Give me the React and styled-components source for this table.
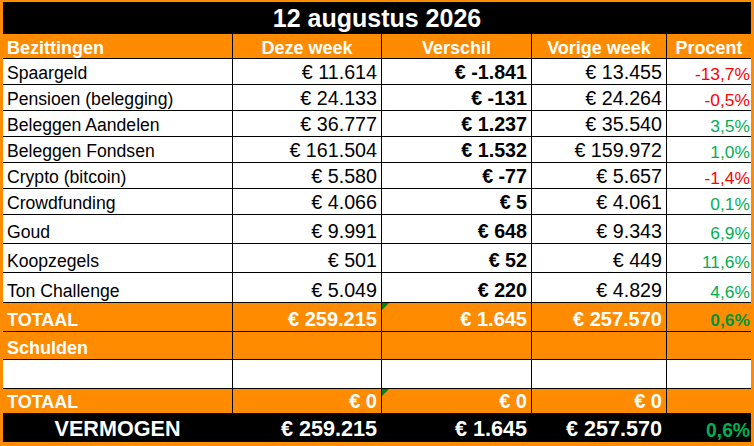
import React from 'react';
import styled, { createGlobalStyle, css } from 'styled-components';

const ORANGE = '#ff8c00';
const GREEN = '#00b050';
const RED = '#ff0000';

const GlobalStyle = createGlobalStyle`
  html, body {
    margin: 0;
    padding: 0;
    background: #ffffff;
  }
  body {
    font-family: 'Liberation Sans', Arial, sans-serif;
  }
`;

const rows = [
  { name: 'Spaargeld', now: '€ 11.614', diff: '€ -1.841', prev: '€ 13.455', pct: '-13,7%', neg: true, h: 25 },
  { name: 'Pensioen (belegging)', now: '€ 24.133', diff: '€ -131', prev: '€ 24.264', pct: '-0,5%', neg: true, h: 25 },
  { name: 'Beleggen Aandelen', now: '€ 36.777', diff: '€ 1.237', prev: '€ 35.540', pct: '3,5%', h: 25 },
  { name: 'Beleggen Fondsen', now: '€ 161.504', diff: '€ 1.532', prev: '€ 159.972', pct: '1,0%', h: 25 },
  { name: 'Crypto (bitcoin)', now: '€ 5.580', diff: '€ -77', prev: '€ 5.657', pct: '-1,4%', neg: true, h: 25 },
  { name: 'Crowdfunding', now: '€ 4.066', diff: '€ 5', prev: '€ 4.061', pct: '0,1%', h: 25 },
  { name: 'Goud', now: '€ 9.991', diff: '€ 648', prev: '€ 9.343', pct: '6,9%', h: 28 },
  { name: 'Koopzegels', now: '€ 501', diff: '€ 52', prev: '€ 449', pct: '11,6%', h: 28 },
  { name: 'Ton Challenge', now: '€ 5.049', diff: '€ 220', prev: '€ 4.829', pct: '4,6%', h: 29 },
];

const App = () => {
  return (
    <React.Fragment>
      <GlobalStyle />
      <Sheet>
        <Title>12 augustus 2026</Title>

        {/* Header row */}
        <Cell tone='orange' h={24}><Label>Bezittingen</Label></Cell>
        <Cell tone='orange' h={24} align='center'><Label>Deze week</Label></Cell>
        <Cell tone='orange' h={24} align='center'><Label>Verschil</Label></Cell>
        <Cell tone='orange' h={24} align='center'><Label>Vorige week</Label></Cell>
        <Cell tone='orange' h={24} align='center'><Label>Procent</Label></Cell>

        {/* Bezittingen */}
        {rows.map(r => (
          <React.Fragment key={r.name}>
            <Cell h={r.h}><Text>{r.name}</Text></Cell>
            <Cell h={r.h} align='right'><Amount>{r.now}</Amount></Cell>
            <Cell h={r.h} align='right'><Amount bold>{r.diff}</Amount></Cell>
            <Cell h={r.h} align='right'><Amount>{r.prev}</Amount></Cell>
            <Cell h={r.h} align='right' tight><Percent neg={r.neg}>{r.pct}</Percent></Cell>
          </React.Fragment>
        ))}

        <Cell tone='orange' h={28} pb={2}><Label>TOTAAL</Label></Cell>
        <Cell tone='orange' h={28} pb={2} align='right'><Amount bold size={20}>€ 259.215</Amount></Cell>
        <Cell tone='orange' h={28} pb={2} align='right' flagged><Amount bold size={20}>€ 1.645</Amount></Cell>
        <Cell tone='orange' h={28} pb={2} align='right'><Amount bold size={20}>€ 257.570</Amount></Cell>
        <Cell tone='orange' h={28} pb={2} align='right' tight><Percent bold dark>0,6%</Percent></Cell>

        {/* Schulden */}
        <Cell tone='orange' h={27} pb={2}><Label>Schulden</Label></Cell>
        <Cell tone='orange' h={27} />
        <Cell tone='orange' h={27} />
        <Cell tone='orange' h={27} />
        <Cell tone='orange' h={27} />

        <Cell h={28} />
        <Cell h={28} />
        <Cell h={28} />
        <Cell h={28} />
        <Cell h={28} />

        <Cell tone='orange' h={24} pb={2}><Label>TOTAAL</Label></Cell>
        <Cell tone='orange' h={24} pb={2} align='right'><Amount bold size={20}>€ 0</Amount></Cell>
        <Cell tone='orange' h={24} pb={2} align='right' flagged><Amount bold size={20}>€ 0</Amount></Cell>
        <Cell tone='orange' h={24} pb={2} align='right'><Amount bold size={20}>€ 0</Amount></Cell>
        <Cell tone='orange' h={24} />

        {/* Vermogen */}
        <Cell tone='black' h={28} pb={2} align='center'><Big>VERMOGEN</Big></Cell>
        <Cell tone='black' h={28} pb={2} align='right'><Big>€ 259.215</Big></Cell>
        <Cell tone='black' h={28} pb={2} align='right'><Big>€ 1.645</Big></Cell>
        <Cell tone='black' h={28} pb={2} align='right'><Big>€ 257.570</Big></Cell>
        <Cell tone='black' h={28} pb={2} align='right' tight><Percent bold size={19.3}>0,6%</Percent></Cell>
      </Sheet>
    </React.Fragment>
  );
};

const Sheet = styled.div`
  display: grid;
  grid-template-columns: 229px 148px 149px 134px 84px;
  gap: 1px;
  width: 748px;
  background-color: #000000;
  border-style: solid;
  border-color: ${ORANGE};
  border-width: 2px 3px 4px 3px;
`;

const Title = styled.div`
  grid-column: 1 / -1;
  height: 31px;
  display: flex;
  align-items: flex-end;
  justify-content: center;
  padding-bottom: 2px;
  box-sizing: border-box;
  background-color: #000000;
  color: #ffffff;
  font-weight: bold;
  font-size: 25px;
  line-height: 1;
`;

const toneColors = {
  white: css`background-color: #ffffff; color: #000000;`,
  orange: css`background-color: ${ORANGE}; color: #ffffff;`,
  black: css`background-color: #000000; color: #ffffff;`,
};

const Cell = styled.div`
  position: relative;
  height: ${props => props.h}px;
  display: flex;
  align-items: flex-end;
  justify-content: ${props => props.align === 'right' ? 'flex-end' : props.align === 'center' ? 'center' : 'flex-start'};
  padding: 0 ${props => props.tight ? '1px' : '4px'} ${props => props.pb || 1}px 4px;
  box-sizing: border-box;
  white-space: nowrap;
  line-height: 1;
  ${props => toneColors[props.tone || 'white']};

  /* Excel's green error marker */
  ${props => props.flagged && css`
    &::before {
      content: '';
      position: absolute;
      top: 0;
      left: 0;
      border-style: solid;
      border-width: 7px 7px 0 0;
      border-color: #0a7d1e transparent transparent transparent;
    }
  `}
`;

const Text = styled.span`
  font-size: 17.6px;
`;

const Label = styled.span`
  font-size: 18px;
  font-weight: bold;
`;

const Amount = styled.span`
  font-size: ${props => props.size || 19.7}px;
  font-weight: ${props => props.bold ? 'bold' : 'normal'};
`;

const Percent = styled.span`
  font-size: ${props => props.size || 17.4}px;
  font-weight: ${props => props.bold ? 'bold' : 'normal'};
  color: ${props => props.neg ? RED : props.dark ? '#00963f' : GREEN};
`;

const Big = styled.span`
  font-size: 21.6px;
  font-weight: bold;
`;

export default App;
